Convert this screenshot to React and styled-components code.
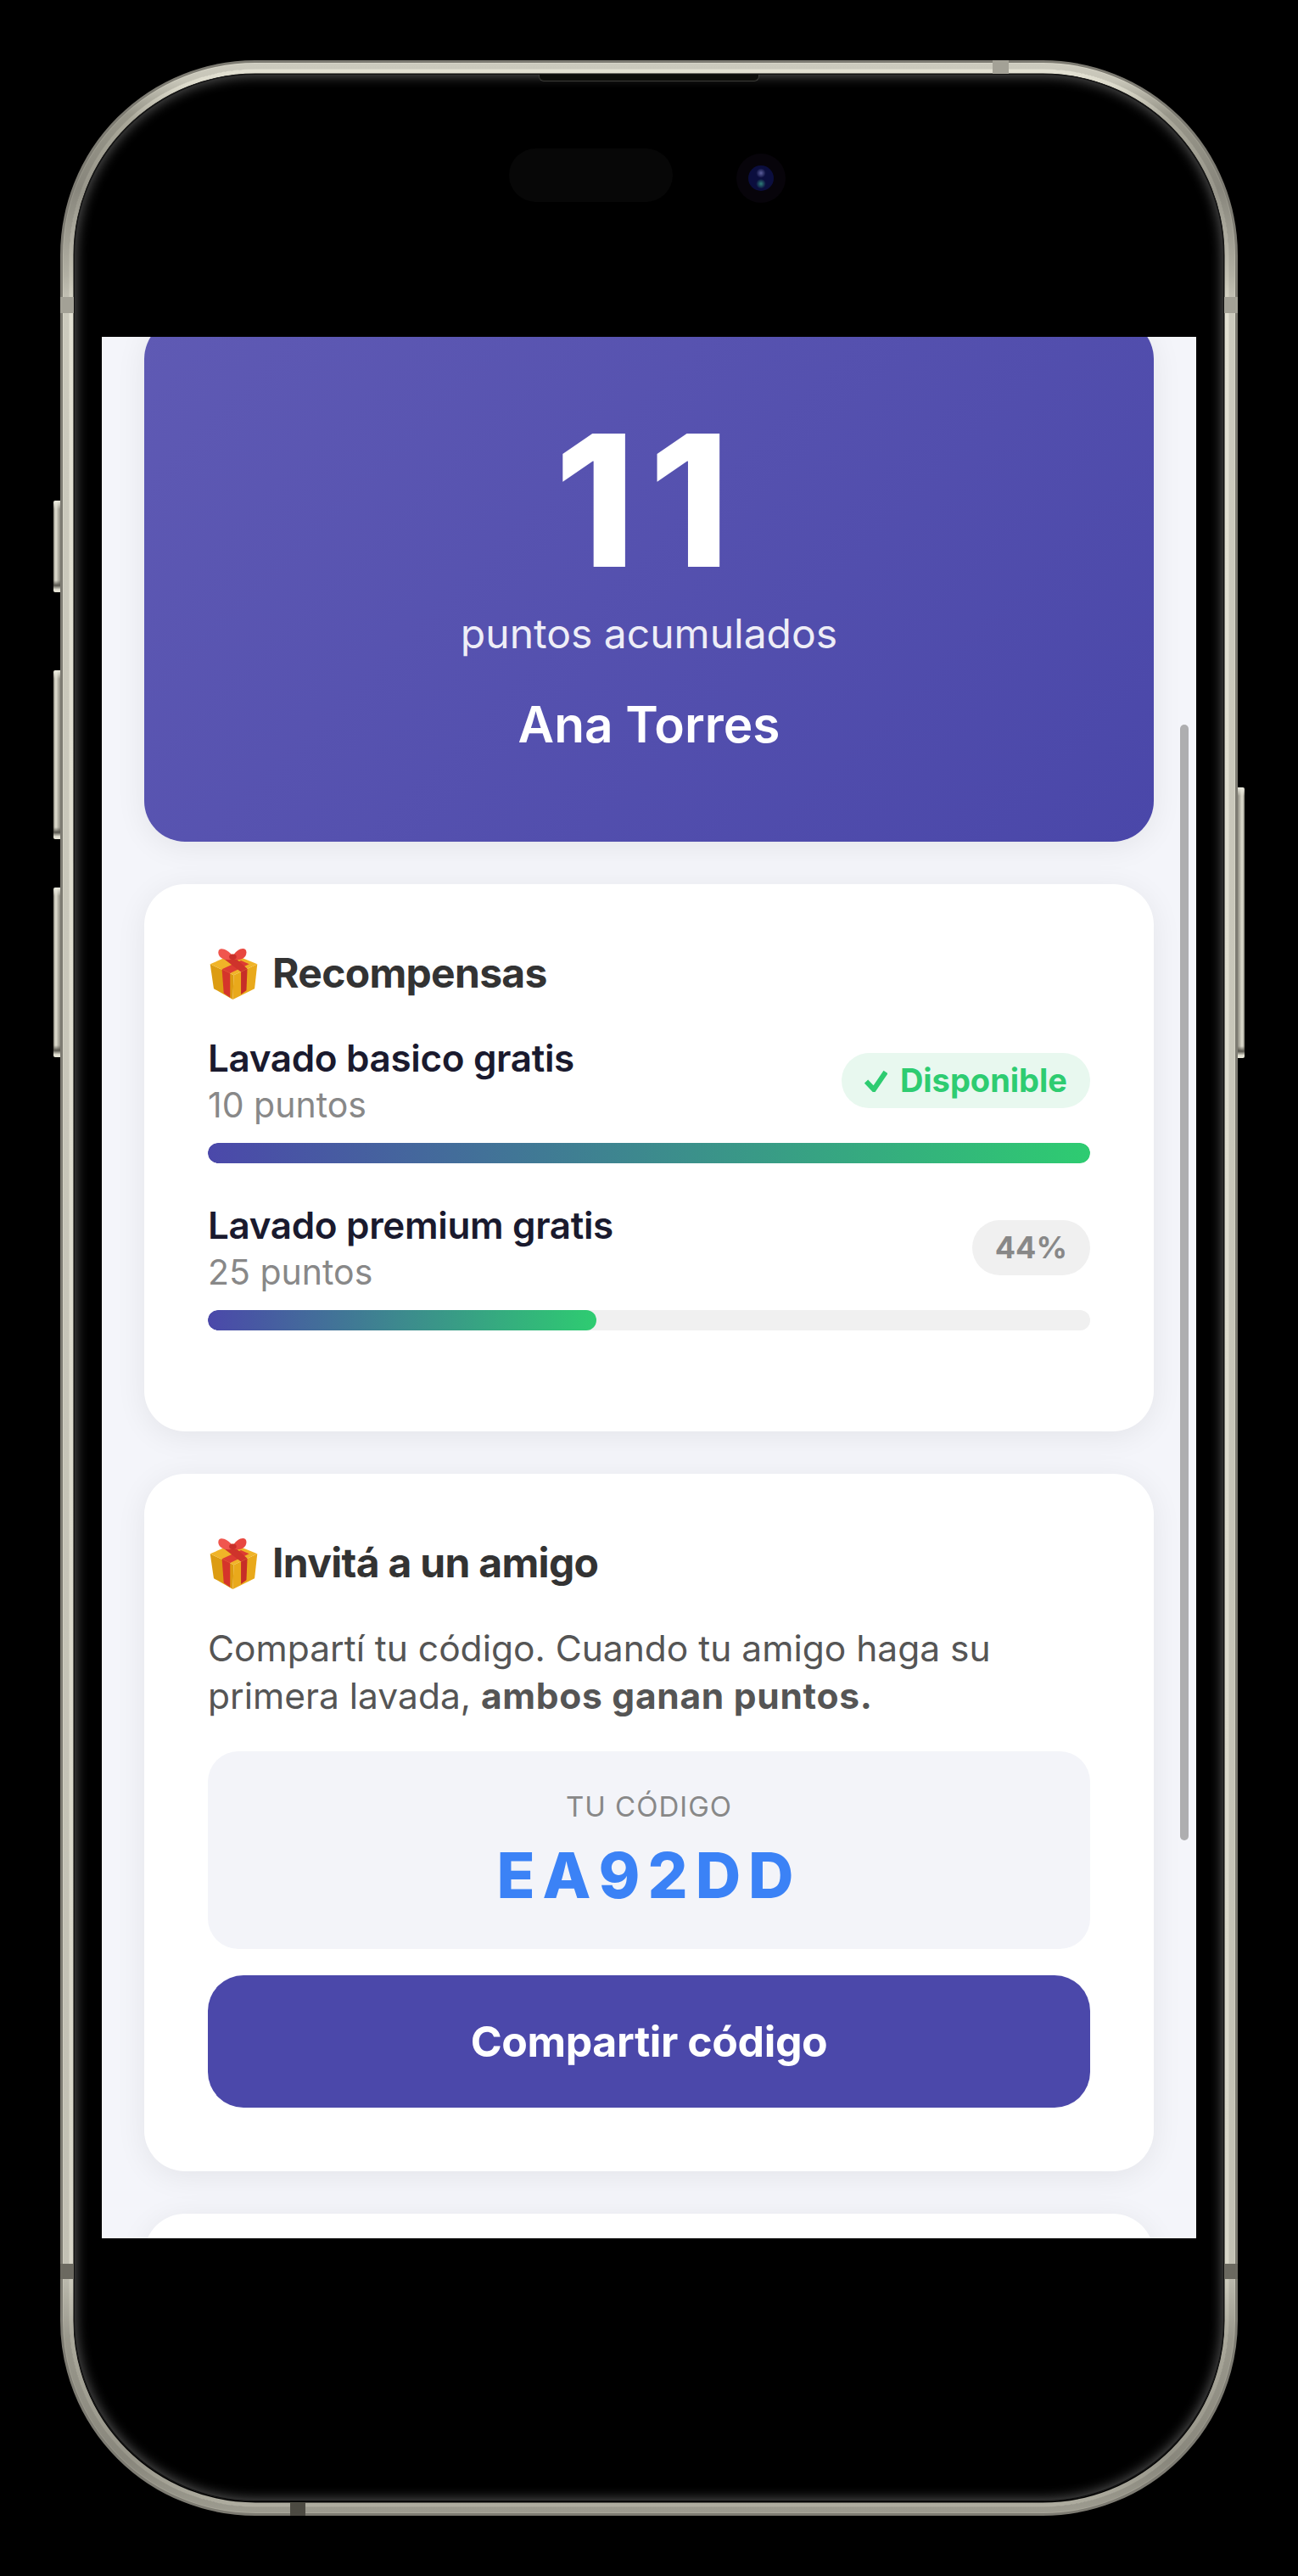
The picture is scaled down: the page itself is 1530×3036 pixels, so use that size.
import React from 'react';
import styled, { createGlobalStyle } from 'styled-components';

const POINTS = 11;

const rewards = [
  { name: 'Lavado basico gratis', points: 10 },
  { name: 'Lavado premium gratis', points: 25 }
];

const GiftIcon = () => (
  <GiftSvg viewBox="0 0 54 58">
    <polygon points="1,19 27,31 26,58 5,46" fill="#dc9c12" />
    <polygon points="27,31 53,19 50,46 26,58" fill="#e9a91b" />
    <polygon points="1,19 26,8 53,19 27,31" fill="#f0b428" />
    <polygon points="14,24.5 23,29 23,56 16,51" fill="#d5342b" />
    <polygon points="35,27.5 42,24 41,48 35,52.5" fill="#c62d28" />
    <polygon points="14,24.5 23,29 44,19 35,15" fill="#dd3c33" />
    <polygon points="16,13 25,9 42,24 35,27.5" fill="#cf332b" />
    <path d="M26 10 C20 2 10 -1 10 6 C10 13 20 16 26 13 Z" fill="#f0564e" />
    <path d="M26 10 C31 1 41 -1 41 6 C41 13 32 16 26 13 Z" fill="#e8473f" />
    <ellipse cx="26" cy="11" rx="4" ry="3" fill="#c9302a" />
  </GiftSvg>
);

const CheckIcon = () => (
  <CheckSvg viewBox="0 0 27 26">
    <polyline points="2,13.5 11,23 25,2.5" fill="none" stroke="#2ecc71" strokeWidth="6" />
  </CheckSvg>
);

const PhoneFrame = () => (
  <FrameSvg viewBox="0 0 1388 2894">
    <defs>
      <linearGradient id="metal" x1="0" y1="0" x2="0" y2="1">
        <stop offset="0" stopColor="#e2e0d2" />
        <stop offset="0.006" stopColor="#dcdacb" />
        <stop offset="0.02" stopColor="#a9a799" />
        <stop offset="0.05" stopColor="#97958a" />
        <stop offset="0.085" stopColor="#c4c2b4" />
        <stop offset="0.1" stopColor="#e2e0d2" />
        <stop offset="0.9" stopColor="#d8d6c8" />
        <stop offset="0.93" stopColor="#aaa89b" />
        <stop offset="0.98" stopColor="#98968a" />
        <stop offset="1" stopColor="#aeac9f" />
      </linearGradient>
    </defs>
    <rect x="2" y="2" width="1384" height="2890" rx="228" fill="none" stroke="#7d7b72" strokeWidth="4" />
    <rect x="7" y="7" width="1374" height="2880" rx="223" fill="none" stroke="url(#metal)" strokeWidth="8" opacity="0.9" />
    <rect x="13" y="13" width="1362" height="2868" rx="217" fill="none" stroke="url(#metal)" strokeWidth="5" />
    <rect x="0" y="279" width="16" height="19" fill="#a3a196" />
    <rect x="1372" y="279" width="16" height="19" fill="#a3a196" />
    <rect x="1099" y="0" width="19" height="16" fill="#a3a196" />
    <rect x="0" y="2597" width="16" height="18" fill="#6b6960" />
    <rect x="1372" y="2597" width="16" height="18" fill="#6b6960" />
    <rect x="271" y="2878" width="18" height="16" fill="#4c4a42" />
  </FrameSvg>
);

const App = () => (
  <>
    <GlobalStyle />
    <Page>
      <Phone>
        <PhoneFrame />
        <SideButton $side="left" $top={519} $height={108} />
        <SideButton $side="left" $top={719} $height={199} />
        <SideButton $side="left" $top={975} $height={200} />
        <SideButton $side="right" $top={857} $height={319} />
        <Glass>
          <Speaker />
          <Sensors>
            <Island />
            <Camera>
              <Lens />
            </Camera>
          </Sensors>
          <Screen>
            <Hero>
              <HeroPoints>{POINTS}</HeroPoints>
              <HeroLabel>puntos acumulados</HeroLabel>
              <HeroName>Ana Torres</HeroName>
            </Hero>

            <Card>
              <CardTitle>
                <GiftIcon />
                Recompensas
              </CardTitle>
              {rewards.map((reward) => {
                const percent = Math.min(Math.round((POINTS / reward.points) * 100), 100);
                const available = percent >= 100;
                return (
                  <Reward key={reward.name}>
                    <RewardHead>
                      <div>
                        <RewardName>{reward.name}</RewardName>
                        <RewardPoints>{reward.points} puntos</RewardPoints>
                      </div>
                      <Badge $available={available}>
                        {available && <CheckIcon />}
                        {available ? 'Disponible' : `${percent}%`}
                      </Badge>
                    </RewardHead>
                    <Track>
                      <Fill style={{ width: `${percent}%` }} />
                    </Track>
                  </Reward>
                );
              })}
            </Card>

            <Card>
              <CardTitle>
                <GiftIcon />
                Invitá a un amigo
              </CardTitle>
              <InviteText>
                Compartí tu código. Cuando tu amigo haga su primera lavada, <strong>ambos ganan puntos.</strong>
              </InviteText>
              <CodeBox>
                <CodeLabel>TU CÓDIGO</CodeLabel>
                <Code>EA92DD</Code>
              </CodeBox>
              <ShareButton type="button">Compartir código</ShareButton>
            </Card>

            <Card />
            <ScrollThumb />
          </Screen>
        </Glass>
      </Phone>
    </Page>
  </>
);

export default App;

const GlobalStyle = createGlobalStyle`
  * {
    box-sizing: border-box;
  }
  body {
    margin: 0;
    background: #000;
    font-family: 'Inter', 'Liberation Sans', sans-serif;
  }
`;

const Page = styled.div`
  width: 1530px;
  height: 3036px;
  padding: 71px;
  background: #000;
  overflow: hidden;
`;

const Phone = styled.div`
  position: relative;
  width: 1388px;
  height: 2894px;
  padding: 16px 16px 17px;
`;

const FrameSvg = styled.svg`
  position: absolute;
  top: 0;
  left: 0;
  width: 1388px;
  height: 2894px;
`;

const SideButton = styled.div`
  position: absolute;
  top: ${(p) => p.$top}px;
  ${(p) => (p.$side === 'left' ? 'left: -8px;' : 'right: -8px;')}
  width: 8px;
  height: ${(p) => p.$height}px;
  border-radius: ${(p) => (p.$side === 'left' ? '2px 0 0 2px' : '0 2px 2px 0')};
  background:
    linear-gradient(180deg, #ecebdf 0, rgba(236, 235, 223, 0) 10px, rgba(90, 88, 80, 0) calc(100% - 14px), #55534b calc(100% - 8px), #e6e4d6 calc(100% - 3px)),
    linear-gradient(${(p) => (p.$side === 'left' ? '90deg' : '270deg')}, #8a887d 0, #e2e0d2 35%, #8d8b80 100%);
`;

const Glass = styled.div`
  position: relative;
  height: 100%;
  padding: 88px 33px 0;
  border-radius: 214px;
  background: #000;
  box-shadow: inset 0 0 0 1px #111, inset 0 0 14px 3px rgba(190, 190, 190, 0.42);
`;

const Speaker = styled.div`
  position: absolute;
  top: 1px;
  left: 548px;
  width: 260px;
  height: 8px;
  border: 1px solid #3b3b38;
  border-top: none;
  border-radius: 0 0 6px 6px;
  background: #0c0c0a;
`;

const Sensors = styled.div`
  display: flex;
  align-items: center;
  gap: 75px;
  height: 63px;
  padding-left: 480px;
`;

const Island = styled.div`
  width: 193px;
  height: 63px;
  border-radius: 32px;
  background: #070707;
`;

const Camera = styled.div`
  display: flex;
  align-items: center;
  justify-content: center;
  width: 58px;
  height: 58px;
  margin-top: 6px;
  border-radius: 50%;
  background: #07040a;
`;

const Lens = styled.div`
  width: 30px;
  height: 30px;
  border-radius: 50%;
  background:
    radial-gradient(circle at 50% 30%, #5d5f9c 0, rgba(93, 95, 156, 0) 22%),
    radial-gradient(circle at 50% 72%, #2e7f78 0, rgba(46, 127, 120, 0) 22%),
    #0b0e3e;
`;

const Screen = styled.div`
  position: relative;
  display: flex;
  flex-direction: column;
  gap: 50px;
  height: 2241px;
  margin-top: 159px;
  padding: 0 50px;
  overflow: hidden;
  background: #f4f5fa;
`;

const Hero = styled.div`
  flex: none;
  margin-top: -22px;
  padding: 107px 0 102px;
  border-radius: 48px;
  background: linear-gradient(135deg, #5f5ab4 0%, #4a47a9 100%);
  box-shadow: 0 6px 36px rgba(0, 0, 0, 0.07);
  color: #fff;
  text-align: center;
`;

const HeroPoints = styled.div`
  font-size: 216px;
  font-weight: 800;
  letter-spacing: 16px;
  line-height: 216px;
`;

const HeroLabel = styled.div`
  margin-top: 20px;
  font-size: 48px;
  line-height: 58px;
  opacity: 0.9;
`;

const HeroName = styled.div`
  margin-top: 42px;
  font-size: 58.5px;
  font-weight: 600;
  line-height: 72px;
`;

const Card = styled.div`
  flex: none;
  padding: 75px;
  border-radius: 48px;
  background: #fff;
  box-shadow: 0 6px 36px rgba(0, 0, 0, 0.07);
`;

const CardTitle = styled.div`
  display: flex;
  align-items: center;
  gap: 15px;
  margin-bottom: 43px;
  color: #333;
  font-size: 48px;
  font-weight: 700;
  letter-spacing: -0.7px;
  line-height: 60px;
`;

const GiftSvg = styled.svg`
  flex: none;
  width: 61px;
  height: 62px;
  margin: -1px 0;
`;

const Reward = styled.div`
  margin-bottom: 46px;

  &:last-child {
    margin-bottom: 44px;
  }
`;

const RewardHead = styled.div`
  display: flex;
  align-items: center;
  justify-content: space-between;
  margin-bottom: 20px;
`;

const RewardName = styled.div`
  color: #1a1a2e;
  font-size: 44px;
  font-weight: 600;
  letter-spacing: -0.35px;
  line-height: 54px;
`;

const RewardPoints = styled.div`
  margin-top: 3px;
  color: #888;
  font-size: 41px;
  line-height: 50px;
`;

const Badge = styled.div`
  display: flex;
  align-items: center;
  gap: 15px;
  height: 65px;
  padding: 0 27px;
  border-radius: 33px;
  background: ${(p) => (p.$available ? '#e8f8ef' : '#f0f0f0')};
  color: ${(p) => (p.$available ? '#2ecc71' : '#888')};
  font-size: ${(p) => (p.$available ? 38 : 36)}px;
  font-weight: 700;
  line-height: 65px;
`;

const CheckSvg = styled.svg`
  flex: none;
  width: 27px;
  height: 26px;
`;

const Track = styled.div`
  height: 24px;
  border-radius: 12px;
  background: #f0f0f0;
  overflow: hidden;
`;

const Fill = styled.div`
  height: 100%;
  border-radius: 12px;
  background: linear-gradient(90deg, #4b48aa, #2ecc71);
`;

const InviteText = styled.p`
  margin: 0 0 37px;
  color: #555;
  font-size: 42.5px;
  line-height: 56px;

  strong {
    font-weight: 700;
    letter-spacing: 0.7px;
  }
`;

const CodeBox = styled.div`
  height: 233px;
  margin-bottom: 31px;
  padding-top: 43px;
  border-radius: 36px;
  background: #f3f4f9;
  text-align: center;
`;

const CodeLabel = styled.div`
  color: #888;
  font-size: 33px;
  letter-spacing: 1px;
  line-height: 44px;
`;

const Code = styled.div`
  margin-top: 12px;
  color: #3b82f6;
  font-size: 74px;
  font-weight: 800;
  letter-spacing: 9px;
  line-height: 94px;
`;

const ShareButton = styled.button`
  display: block;
  width: 100%;
  height: 156px;
  border: none;
  border-radius: 42px;
  background: #4b48aa;
  color: #fff;
  font-family: inherit;
  font-size: 50px;
  font-weight: 700;
  letter-spacing: -0.4px;
`;

const ScrollThumb = styled.div`
  position: absolute;
  top: 457px;
  right: 9px;
  width: 10px;
  height: 1315px;
  border-radius: 5px;
  background: #aeaeb0;
`;
